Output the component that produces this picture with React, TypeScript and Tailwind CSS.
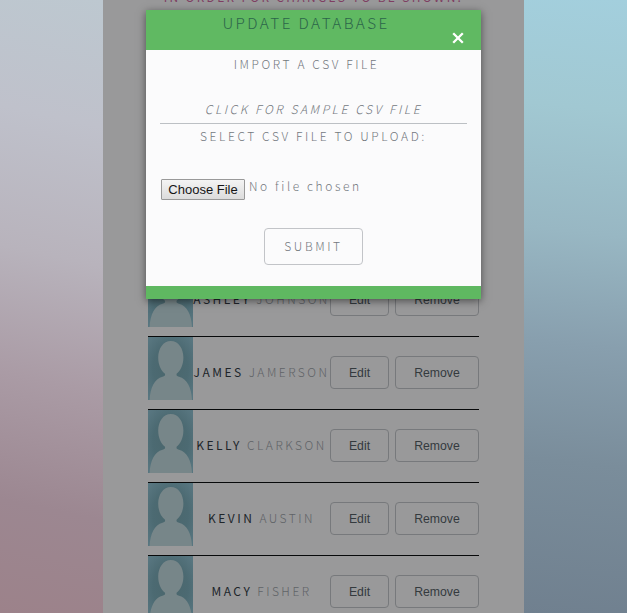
const people = [
  { first: 'Ashley', last: 'Johnson' },
  { first: 'James', last: 'Jamerson' },
  { first: 'Kelly', last: 'Clarkson' },
  { first: 'Kevin', last: 'Austin' },
  { first: 'Macy', last: 'Fisher' },
];

function Avatar() {
  return (
    <svg width="45" height="63" viewBox="0 0 45 63" className="block shrink-0">
      <defs>
        <radialGradient id="backdrop" cx="50%" cy="50%" r="65%">
          <stop offset="0" stopColor="#4a666c" />
          <stop offset="0.6" stopColor="#4c6a72" />
          <stop offset="1" stopColor="#587680" />
        </radialGradient>
      </defs>
      <rect width="45" height="63" fill="url(#backdrop)" />
      <path
        d="M22.800 4C30.500 4 35.400 11.500 35.400 20.500C35.400 28 32.500 33.500 28.600 36.800C28.200 38.600 29 39.300 31 39.800C39 41.800 43.600 51 44 63H1.600C2.200 51 6.500 41.800 14.500 39.800C16.600 39.300 17.400 38.600 17 36.800C13 33.500 10.200 28 10.200 20.500C10.200 11.500 15.200 4 22.800 4Z"
        fill="#778689"
      />
    </svg>
  );
}

function PersonRow({ first, last }: { first: string; last: string }) {
  return (
    <li className="flex h-[73px] border-t border-[#07090a]">
      <Avatar />
      <div className="flex h-[72px] w-[137px] shrink-0 items-center justify-center pb-[2px] text-[12px] tracking-[2.5px] whitespace-nowrap uppercase">
        <span className="font-normal text-[#20252a]">{first}</span>
        <span className="ml-[5px] font-light text-[#606367]">{last}</span>
      </div>
      <div className="flex h-[71px] items-center gap-[6px] font-['Liberation_Sans',sans-serif] text-[12.250px] text-[#343a3e]">
        <button className="h-[33px] w-[59px] rounded-[4px] border border-[#77797c] pt-[2px]">Edit</button>
        <button className="h-[33px] w-[84px] rounded-[4px] border border-[#77797c] pt-[2px]">Remove</button>
      </div>
    </li>
  );
}

function UpdateDialog() {
  return (
    <section className="absolute top-[10px] left-[146px] flex h-[289px] w-[335px] flex-col bg-[#fbfbfc] text-center font-light text-[#73787e] uppercase shadow-[0_2px_8px_rgba(0,0,0,0.5)]">
      <header className="relative h-10 shrink-0 bg-[#60b962] pr-[15px] text-[15.250px] leading-[24px] tracking-[2.4px] text-[#2c664a]">
        Update Database
        <svg className="absolute top-[22px] right-[17px]" width="12" height="12" viewBox="0 0 12 12">
          <path d="M1.200 1.200L10.800 10.800M10.800 1.200L1.200 10.800" stroke="#fff" strokeWidth="2.300" />
        </svg>
      </header>
      <div className="flex flex-1 flex-col px-[14px] text-[12px] tracking-[2.6px]">
        <p className="h-[45px] pr-[14px] leading-[28px]">Import a CSV file</p>
        <p className="h-[29px] border-b border-[#bcc0c4] leading-[28px] italic">Click for sample CSV file</p>
        <p className="h-[55px] leading-[24px]">Select CSV file to upload:</p>
        <div className="flex h-[22px] pl-px normal-case">
          <button className="h-[21px] w-[84px] rounded-[1px] border border-[#999] bg-linear-to-b from-[#f4f4f4] to-[#dcdcdc] font-['Liberation_Sans',sans-serif] text-[13px] leading-[19px] font-normal tracking-normal text-[#151515]">
            Choose File
          </button>
          <span className="ml-1 leading-[13px]">No file chosen</span>
        </div>
        <button className="mt-[27px] h-[37px] w-[99px] self-center rounded-[4px] border border-[#c2c4c8] pb-[2px] text-[12px] tracking-[2.6px] uppercase">
          Submit
        </button>
      </div>
      <footer className="h-[13px] shrink-0 bg-[#5fb861]" />
    </section>
  );
}

export default function App() {
  return (
    <main className="relative flex h-[613px] w-[627px] overflow-hidden bg-[#999a9c] font-['Noto_Sans_CJK_SC',sans-serif]">
      <div className="w-[103px] bg-[linear-gradient(192deg,#bdc8d0_0%,#bfc1cb_20%,#b8b3bc_42%,#aa9ba5_62%,#9c8791_82%,#9c828a_100%)]" />
      <div className="flex w-[421px] flex-col bg-[#99999a] px-[45px]">
        <p className="-mt-[8px] h-[271px] shrink-0 text-center text-[12px] leading-[10px] font-normal tracking-[2.300px] whitespace-nowrap text-[#803f63] uppercase">
          In order for changes to be shown.
        </p>
        <ul className="shrink-0">
          {people.map((person) => (
            <PersonRow key={person.first} {...person} />
          ))}
        </ul>
      </div>
      <div className="w-[103px] bg-[linear-gradient(186deg,#a3cfdd_0%,#a1c8d2_18%,#98b7c3_38%,#889fae_56%,#7a8d9b_75%,#70808f_100%)]" />
      <UpdateDialog />
    </main>
  );
}
